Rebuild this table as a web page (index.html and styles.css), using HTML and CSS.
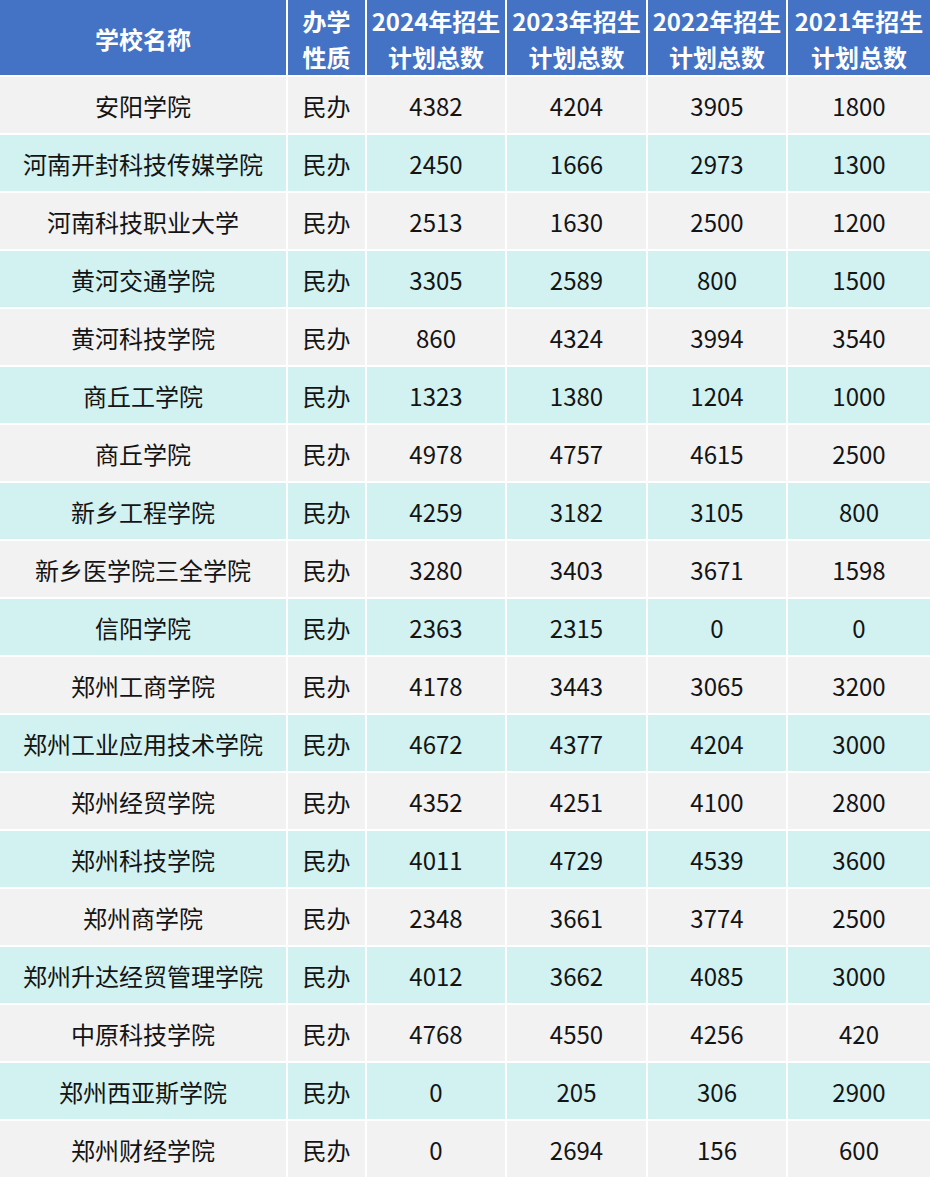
FILE: index.html
```html
<!DOCTYPE html>
<html lang="zh-CN">
<head>
<meta charset="utf-8">
<link rel="stylesheet" href="styles.css">
</head>
<body>
<div class="table">
  <div class="cell head">学校名称</div>
  <div class="cell head">办学<br>性质</div>
  <div class="cell head">2024年招生<br>计划总数</div>
  <div class="cell head">2023年招生<br>计划总数</div>
  <div class="cell head">2022年招生<br>计划总数</div>
  <div class="cell head">2021年招生<br>计划总数</div>

  <div class="cell odd">安阳学院</div><div class="cell odd">民办</div><div class="cell odd">4382</div><div class="cell odd">4204</div><div class="cell odd">3905</div><div class="cell odd">1800</div>
  <div class="cell even">河南开封科技传媒学院</div><div class="cell even">民办</div><div class="cell even">2450</div><div class="cell even">1666</div><div class="cell even">2973</div><div class="cell even">1300</div>
  <div class="cell odd">河南科技职业大学</div><div class="cell odd">民办</div><div class="cell odd">2513</div><div class="cell odd">1630</div><div class="cell odd">2500</div><div class="cell odd">1200</div>
  <div class="cell even">黄河交通学院</div><div class="cell even">民办</div><div class="cell even">3305</div><div class="cell even">2589</div><div class="cell even">800</div><div class="cell even">1500</div>
  <div class="cell odd">黄河科技学院</div><div class="cell odd">民办</div><div class="cell odd">860</div><div class="cell odd">4324</div><div class="cell odd">3994</div><div class="cell odd">3540</div>
  <div class="cell even">商丘工学院</div><div class="cell even">民办</div><div class="cell even">1323</div><div class="cell even">1380</div><div class="cell even">1204</div><div class="cell even">1000</div>
  <div class="cell odd">商丘学院</div><div class="cell odd">民办</div><div class="cell odd">4978</div><div class="cell odd">4757</div><div class="cell odd">4615</div><div class="cell odd">2500</div>
  <div class="cell even">新乡工程学院</div><div class="cell even">民办</div><div class="cell even">4259</div><div class="cell even">3182</div><div class="cell even">3105</div><div class="cell even">800</div>
  <div class="cell odd">新乡医学院三全学院</div><div class="cell odd">民办</div><div class="cell odd">3280</div><div class="cell odd">3403</div><div class="cell odd">3671</div><div class="cell odd">1598</div>
  <div class="cell even">信阳学院</div><div class="cell even">民办</div><div class="cell even">2363</div><div class="cell even">2315</div><div class="cell even">0</div><div class="cell even">0</div>
  <div class="cell odd">郑州工商学院</div><div class="cell odd">民办</div><div class="cell odd">4178</div><div class="cell odd">3443</div><div class="cell odd">3065</div><div class="cell odd">3200</div>
  <div class="cell even">郑州工业应用技术学院</div><div class="cell even">民办</div><div class="cell even">4672</div><div class="cell even">4377</div><div class="cell even">4204</div><div class="cell even">3000</div>
  <div class="cell odd">郑州经贸学院</div><div class="cell odd">民办</div><div class="cell odd">4352</div><div class="cell odd">4251</div><div class="cell odd">4100</div><div class="cell odd">2800</div>
  <div class="cell even">郑州科技学院</div><div class="cell even">民办</div><div class="cell even">4011</div><div class="cell even">4729</div><div class="cell even">4539</div><div class="cell even">3600</div>
  <div class="cell odd">郑州商学院</div><div class="cell odd">民办</div><div class="cell odd">2348</div><div class="cell odd">3661</div><div class="cell odd">3774</div><div class="cell odd">2500</div>
  <div class="cell even">郑州升达经贸管理学院</div><div class="cell even">民办</div><div class="cell even">4012</div><div class="cell even">3662</div><div class="cell even">4085</div><div class="cell even">3000</div>
  <div class="cell odd">中原科技学院</div><div class="cell odd">民办</div><div class="cell odd">4768</div><div class="cell odd">4550</div><div class="cell odd">4256</div><div class="cell odd">420</div>
  <div class="cell even">郑州西亚斯学院</div><div class="cell even">民办</div><div class="cell even">0</div><div class="cell even">205</div><div class="cell even">306</div><div class="cell even">2900</div>
  <div class="cell odd">郑州财经学院</div><div class="cell odd">民办</div><div class="cell odd">0</div><div class="cell odd">2694</div><div class="cell odd">156</div><div class="cell odd">600</div>
</div>
</body>
</html>
```

FILE: styles.css
```css
html, body {
  margin: 0;
  padding: 0;
  background: #ffffff;
}
body {
  font-family: "Noto Sans CJK SC", "Noto Sans", sans-serif;
}
.table {
  display: grid;
  grid-template-columns: 286px 77px 138px 139px 138px 142px;
  grid-template-rows: 75px;
  grid-auto-rows: 56px;
  gap: 2px;
  width: 930px;
  background: #ffffff;
}
.cell {
  display: flex;
  align-items: center;
  justify-content: center;
  text-align: center;
  font-size: 24px;
  color: #141414;
}
.head {
  background: #4472c4;
  color: #ffffff;
  font-weight: 700;
  line-height: 36px;
  padding-top: 2px;
}
.odd {
  background: #f2f2f2;
}
.even {
  background: #d1f2f0;
}
```
